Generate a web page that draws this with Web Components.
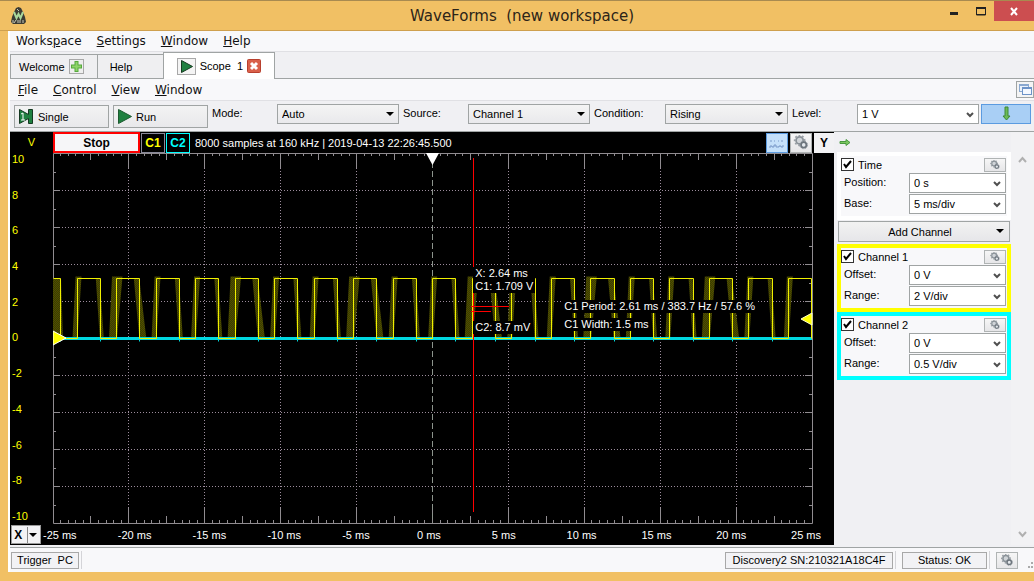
<!DOCTYPE html>
<html lang="en">
<head>
<meta charset="utf-8">
<title>WaveForms (new workspace)</title>
<style>
  html, body { height: 100%; margin: 0; }
  body {
    --gold: #f1c064; --face: #f0f0f3; --bar: #f8f8fa; --edge: #a0a4a4; --ui: "Liberation Sans", Arial, sans-serif;
    --menu: "DejaVu Sans", Verdana, sans-serif;
    font: 11px/14px var(--ui); color: #000; background: var(--gold);
  }
</style>
</head>
<body>
<wf-window>
  <wf-titlebar slot="title">WaveForms&nbsp; (new workspace)</wf-titlebar>
  <wf-menubar>
    <a href="#workspace">Works<u>p</u>ace</a><a href="#settings"><u>S</u>ettings</a><a href="#window"><u>W</u>indow</a><a href="#help"><u>H</u>elp</a>
  </wf-menubar>
  <wf-tabs></wf-tabs>
  <wf-menubar docked>
    <a href="#file"><u>F</u>ile</a><a href="#control"><u>C</u>ontrol</a><a href="#view"><u>V</u>iew</a><a href="#scope-window"><u>W</u>indow</a>
  </wf-menubar>
  <wf-toolbar></wf-toolbar>
  <wf-workarea>
    <wf-scope></wf-scope>
    <wf-sidebar slot="side">
      <wf-group name="Time" color="#fff">
        <wf-select label="Position:" value="0 s" look="combo"></wf-select>
        <wf-select label="Base:" value="5 ms/div" look="combo"></wf-select>
      </wf-group>
      <wf-addchannel>Add Channel</wf-addchannel>
      <wf-group name="Channel 1" color="#ffff00">
        <wf-select label="Offset:" value="0 V" look="combo"></wf-select>
        <wf-select label="Range:" value="2 V/div" look="combo"></wf-select>
      </wf-group>
      <wf-group name="Channel 2" color="#00ffff">
        <wf-select label="Offset:" value="0 V" look="combo"></wf-select>
        <wf-select label="Range:" value="0.5 V/div" look="combo"></wf-select>
      </wf-group>
    </wf-sidebar>
  </wf-workarea>
  <wf-statusbar></wf-statusbar>
</wf-window>

<script>
const BASE = `:host,*{box-sizing:border-box} button,select,input{font:inherit;color:inherit;margin:0;border-radius:0}
button{padding:0;cursor:default} svg{display:block;flex:none} a{color:inherit;text-decoration:none}`;

function define(tag, html, ready) {
  const template = document.createElement("template");
  customElements.define(tag, class extends HTMLElement {
    constructor() {
      super();
      template.innerHTML = `<style>${BASE}</style>` + html;
      this.attachShadow({ mode: "open" }).append(template.content.cloneNode(true));
      if (ready) ready(this, this.shadowRoot);
    }
  });
}

define("wf-window", `
<style>
  :host{display:flex;flex-direction:column;min-height:100vh;background:var(--gold);border-top:1px solid #a88a50}
  main{flex:1;display:flex;flex-direction:column;margin:0 0 9px 8px;border-left:2px solid #fff;background:var(--face)}
  ::slotted(wf-workarea){flex:1}
</style>
<slot name="title"></slot>
<main><slot></slot></main>`);

define("wf-titlebar", `
<style>
  :host{display:grid;grid-template-columns:1fr auto 1fr;height:30px;padding-left:10px;border-bottom:1px solid #cfa04e;color:#2c2418;font:15px/30px var(--menu)}
  .logo{margin-top:6px}
  .controls{display:flex;justify-content:flex-end;height:20px}
  button{display:grid;place-items:center;width:27px;border:0;background:none}
  .close{width:40px;background:#cc4e50}
</style>
<svg class="logo" width="17" height="17" viewBox="0 0 17 17" role="img" aria-label="WaveForms">
  <path d="M6 1 8.500 0 11 1l2 4 2 5 1 5-2 2H3l-2-2 1-5 2-5z" fill="#3c3c34"/>
  <path d="M4 5l2.500 6 2-4 2 4L13 5" fill="none" stroke="#a9d79b" stroke-width="2"/>
  <path d="M3 13v3m3-3-2 3m4-3v3m2-3v3m3-3v3M7 2l2 2" stroke="#c9c9b8"/>
</svg>
<span><slot></slot></span>
<div class="controls">
  <button aria-label="Minimize"><svg width="8" height="20"><path d="M0 12.500h8" stroke="#222" stroke-width="3"/></svg></button>
  <button aria-label="Maximize"><svg width="10" height="20"><path d="M.5 6v8h9V6M0 13.500h10" fill="none" stroke="#222"/><path d="M0 7h10" stroke="#222" stroke-width="2"/></svg></button>
  <button class="close" aria-label="Close"><svg width="8" height="20"><path d="M1 7l6 7M7 7l-6 7" stroke="#fff" stroke-width="2"/></svg></button>
</div>`);

define("wf-menubar", `
<style>
  :host{display:flex;align-items:center;height:21px;padding-left:6px;gap:15px;background:var(--bar);border-bottom:1px solid #e0e0e4;font:12px/20px var(--menu)}
  :host([docked]){padding-left:8px;height:22px}
  ::slotted(a){color:#111;text-decoration:none}
  button{display:none;margin-left:auto;width:18px;height:17px;border:1px solid var(--edge);background:#f4f4f4}
  :host([docked]) button{display:block}
</style>
<slot></slot>
<button aria-label="Float window"><svg width="16" height="15" viewBox="0 0 16 15"><rect x="2.500" y="2.500" width="9" height="7" fill="#eaf2fc" stroke="#8aa8d0"/><path d="M2 3h10" stroke="#8aa8d0" stroke-width="2"/><rect x="5.500" y="5.500" width="9" height="7" fill="#f4f8ff" stroke="#6d93c8"/><path d="M5 6h10" stroke="#6d93c8" stroke-width="2"/></svg></button>`);

define("wf-tabs", `
<style>
  :host{display:flex;align-items:flex-end;height:27px;border-bottom:1px solid var(--edge);background:var(--face)}
  button{display:flex;align-items:center;gap:4px;height:24px;padding:0 13px 0 8px;border:solid var(--edge);border-width:1px 0 0 1px;background:#efeff1}
  .help{width:66px;padding-left:12px}
  .scope{height:27px;margin-bottom:-1px;padding:0 13px;background:#fff;border-right-width:1px}
</style>
<button role="tab">Welcome
  <svg width="15" height="15"><rect x=".5" y=".5" width="14" height="14" fill="#eee" stroke="#a8a8a8"/><path d="M7.500 2v11M2 7.500h11" stroke="#55a83c" stroke-width="4"/><path d="M7.500 3v9M3 7.500h9" stroke="#8ed468" stroke-width="2"/></svg></button>
<button role="tab" class="help">Help</button>
<button role="tab" class="scope" aria-selected="true">
  <svg width="19" height="17"><rect x=".5" y=".5" width="18" height="16" fill="#f4f4f4" stroke="#a8a8a8"/><path d="M4.500 2.500l11 6-11 6z" fill="#1f8040" stroke="#163a20"/></svg>
  Scope&nbsp; 1
  <svg width="14" height="14"><rect x=".5" y=".5" width="13" height="13" rx="1" fill="#d9604a" stroke="#b8402e"/><path d="M4 4l6 6M10 4l-6 6" stroke="#fff" stroke-width="3"/></svg>
</button>`);

define("wf-select", `
<style>
  :host{display:flex}
  label{flex:none;width:var(--label,65px);line-height:19px;white-space:pre}
  span{position:relative;flex:1;display:block}
  select{appearance:none;display:block;width:100%;height:20px;padding:0 18px 0 4px;border:1px solid var(--edge);background:linear-gradient(#f4f4f4,#e9e9ec);line-height:18px;outline:0}
  svg{position:absolute;right:5px;top:8px;pointer-events:none}
  :host([look=combo]) select{background:#fff}
  .v{display:none}
  :host([look=combo]) .v{display:block}
  :host([look=combo]) .t{display:none}
</style>
<label for="s"></label>
<span><select id="s"><option></option></select>
<svg class="t" width="8" height="5"><path d="M0 0h8L4 4z"/></svg>
<svg class="v" width="8" height="6"><path d="M1 1l3 3 3-3" fill="none" stroke="#505050" stroke-width="2"/></svg></span>`,
(host, root) => {
  root.querySelector("label").textContent = host.getAttribute("label");
  root.querySelector("option").textContent = host.getAttribute("value");
});

define("wf-toolbar", `
<style>
  :host{display:flex;align-items:flex-start;gap:4px;height:31px;padding:3px 3px 0 4px;background:var(--face);border-bottom:1px solid var(--edge)}
  .act{display:flex;align-items:center;gap:4px;flex:none;width:95px;height:23px;margin-top:1px;padding:0 3px;border:1px solid var(--edge);background:linear-gradient(#f3f3f3,#e8e8eb)}
  wf-select{flex:1 1 187px}
  .condition{--label:71px;flex-basis:194px}
  .level{display:flex;gap:2px;flex:1 1 239px}
  .drop{flex:none;width:50px;height:20px;display:grid;place-items:center;border:1px solid #5b9be0;background:#a9cff5}
</style>
<button class="act"><svg width="16" height="17"><path d="M1.500 1.500l9 5v-5h4v14h-4v-5l-9 5z" fill="#1f8040" stroke="#143820"/><path d="M3 6l2-1v7M3 12h4" fill="none" stroke="#fff"/></svg>Single</button>
<button class="act"><svg width="15" height="17"><path d="M1.500 1.500l13 7-13 7z" fill="#1f8040" stroke="#1c5a30"/></svg>Run</button>
<wf-select label="Mode:" value="Auto"></wf-select>
<wf-select label="Source:" value="Channel 1"></wf-select>
<wf-select class="condition" label="Condition:" value="Rising"></wf-select>
<div class="level"><wf-select label="Level:" value="1 V" look="combo"></wf-select>
<button class="drop" aria-label="Trigger settings"><svg width="9" height="16"><path d="M3 1h3v9h2l-3.500 4L1 10h2z" fill="#6cbb55" stroke="#3c8838"/></svg></button></div>`);

define("wf-workarea", `
<style>
  :host{display:grid;grid-template-columns:minmax(0,1fr) 200px;border-bottom:1px solid var(--edge);padding-bottom:2px}
</style>
<slot></slot><slot name="side"></slot>`);

define("wf-gear", `
<style>
  :host{display:block;width:22px;height:14px}
  button{display:grid;place-items:center;width:100%;height:100%;border:1px solid #b0b4b4;background:linear-gradient(#f6f6f6,#e6e6e8)}
  svg{height:80%;max-width:90%}
</style>
<button aria-label="Options"><svg viewBox="0 0 16 16" width="16"><circle cx="6.500" cy="6" r="4" fill="#d0d4d8" stroke="#8a9298" stroke-width="2"/><circle cx="6.500" cy="6" r="5.500" fill="none" stroke="#9aa0a6" stroke-width="2" stroke-dasharray="2 2"/><circle cx="11" cy="11" r="3" fill="#e4e8ec" stroke="#6c747c" stroke-width="2"/><circle cx="11" cy="11" r="4.300" fill="none" stroke="#8c949c" stroke-dasharray="2 1.400"/></svg></button>`);

define("wf-group", `
<style>
  :host{display:block;border:4px solid var(--group);padding:0 1px 2px 0;background:var(--bar)}
  header{display:flex;align-items:center;justify-content:space-between;height:17px}
  label{display:flex;align-items:center;gap:4px}
  input{appearance:none;width:13px;height:13px;border:1px solid #333;background:#fff;display:grid}
  input:checked{background:#fff url('data:image/svg+xml,<svg xmlns="http://www.w3.org/2000/svg" width="11" height="11"><path d="M2 5l2 3 5-6" fill="none" stroke="black" stroke-width="2"/></svg>')}
  .rows{display:grid;gap:1px;padding-left:3px}
</style>
<header><label><input type="checkbox" checked><b></b></label><wf-gear></wf-gear></header>
<div class="rows"><slot></slot></div>`,
(host, root) => {
  root.querySelector("b").replaceWith(host.getAttribute("name"));
  host.style.setProperty("--group", host.getAttribute("color"));
});

define("wf-addchannel", `
<style>
  :host{display:block;padding:1px 1px 2px}
  button{display:flex;align-items:center;width:100%;height:21px;padding:0 5px;border:1px solid var(--edge);background:linear-gradient(#f2f2f2,#e6e6e9)}
  span{flex:1;text-align:center}
</style>
<button><span><slot></slot></span><svg width="8" height="5"><path d="M0 0h8L4 4z"/></svg></button>`);

define("wf-sidebar", `
<style>
  :host{display:grid;grid-template-columns:minmax(0,1fr) 23px;background:var(--face);padding-left:3px}
  .go{display:block;border:0;background:none;height:20px;padding-left:2px}
  .scroll{display:flex;flex-direction:column;justify-content:space-between;align-items:center;padding:24px 0 7px;background:#f2f2f4}
</style>
<div><button class="go" aria-label="Collapse panel"><svg width="12" height="9"><path d="M1 3.500h6v-2l4 3-4 3v-2H1z" fill="#7cc860" stroke="#4a9840"/></svg></button><slot></slot></div>
<div class="scroll"><svg width="9" height="7"><path d="M1 6l3.500-4L8 6" fill="none" stroke="#b0b0b0" stroke-width="2"/></svg><svg width="9" height="7"><path d="M1 1l3.500 4L8 1" fill="none" stroke="#b0b0b0" stroke-width="2"/></svg></div>`);

define("wf-plot", `
<style>
  :host{display:block;position:relative;min-height:200px}
  svg{position:absolute;width:100%;height:100%}
  svg *{vector-effect:non-scaling-stroke}
  p{position:absolute;margin:0;padding:0 2px;background:#000;color:#fff;line-height:13px;white-space:nowrap}
  .x{left:55.3%;top:30.8%}
  .c2{left:55.3%;top:45.4%}
  .period{left:67%;top:39.6%}
  .width{left:67%;top:44.5%}
</style>
<svg viewBox="0 0 760 371" preserveAspectRatio="none" aria-hidden="true"></svg>
<p class="x">X: 2.64 ms<br>C1: 1.709 V</p><p class="c2">C2: 8.7 mV</p>
<p class="period">C1 Period: 2.61 ms / 383.7 Hz / 57.6 %</p><p class="width">C1 Width: 1.5 ms</p>`,
(host, root) => {
  const W = 759, H = 370, DX = W / 10, DY = H / 10, HIGH = 125.5, LOW = 185.5, PERIOD = 39.52, DUTY = 23.3;
  const px = v => Math.round(v) + .5;
  let grid = "", ticks = "", band = "", wave = `M.5 ${HIGH}`, glow = "";
  for (let i = 1; i < 10; i++) {
    if (i !== 5) grid += `M${px(i * DX - .5)} 0V${H}`;
    grid += `M0 ${px(i * DY)}H${W}`;
  }
  for (let i = 1; i < 100; i++) {
    const n = i % 10 === 0 ? 15 : i % 5 === 0 ? 7 : 3, x = px(i * DX / 10 - .5);
    ticks += `M${x} 0v${n}M${x} ${H}v-${n}`;
  }
  for (let i = 1; i < 20; i++) {
    const n = i % 2 ? 3 : 7, y = px(i * DY / 2);
    ticks += `M0 ${y}h${n}M${W} ${y}h-${n}`;
  }
  band += `M0 ${HIGH}h8l2 60H0z`;
  for (let k = -1; k < 19; k++) {
    const r = 23.5 + k * PERIOD, f = r + DUTY, wide = k % 3 === 1 ? 3 : 0;
    if (k >= 0) {
      wave += `H${px(r)}V${HIGH}`;
      band += `M${r - 4 - wide} ${LOW}L${r - 1 - wide} ${HIGH - 2}H${r + 5 + wide / 2}L${r + 1} ${LOW}z`;
    }
    if (f < W - 2) {
      wave += `H${px(f)}V${LOW}`;
      if (k >= 0) band += `M${f - 4 - wide / 2} ${HIGH}H${f}L${f + 4 + wide} ${LOW}H${f}z`;
      glow += `M${px(f)} ${LOW - 2}v5`;
    }
  }
  wave += `H${W - .5}V${LOW}`;
  root.querySelector("svg").innerHTML = `
    <defs><pattern id="h" width="2" height="2" patternUnits="userSpaceOnUse"><rect width="2" height="2" fill="#344400"/><path d="M0 0h1v1H0zM1 1h1v1H1z" fill="#584800"/></pattern></defs>
    <path d="${grid}" stroke="#9c8c9c" stroke-dasharray="1 2" fill="none"/>
    <path d="${ticks}M.5 .5H${W + .5}V${H + .5}H.5z" stroke="#908c90" fill="none"/>
    <path d="M379.500 0V${H}" stroke="#8c948c" stroke-dasharray="6 3"/>
    <path d="${band}" fill="url(#h)"/>
    <path d="M0 185.500H${W}" stroke="#00d8e0" stroke-width="3"/>
    <path d="${glow}" stroke="#00d8d8" fill="none"/>
    <path d="${wave}" stroke="#f0f000" fill="none"/>
    <path d="M420.500 5V359M418 153.500h38M418 158.500h20" stroke="#f00" fill="none"/>
    <path d="M373 0h13l-6.500 12z" fill="#fff"/>
    <path d="M0 178l13 7-13 7z" fill="#ff0" stroke="#fff"/>
    <path d="M759 160l-11 6 11 6z" fill="#ff0" stroke="#ffc"/>`;
});

define("wf-scope", `
<style>
  :host{display:grid;grid-template-columns:43px minmax(0,1fr) 21px;grid-template-rows:21px minmax(0,1fr) 21px;background:#000;color:#fff}
  .unit{color:#ff0;text-align:center;line-height:21px}
  .head{grid-column:2/4;display:flex;gap:1px;align-items:center}
  .head button{height:20px;width:24px;border:1px solid #889;background:#000;font-weight:bold;font-size:12px}
  .head .stop{width:87px;height:21px;border:2px solid #f00;background:#f6f6f8;color:#000}
  .c1{color:#ff0}
  .head .c2{color:#0ff;border-color:#0ff}
  .info{flex:1;padding-left:4px;white-space:nowrap}
  .right{display:flex;gap:2px}
  .head .wave{display:grid;place-items:center;width:22px;border-color:#5b9be0;background:#c4e0fa}
  .right wf-gear{height:20px}
  .head .y{width:20px;background:#f2f2f4;color:#000;border:0}
  .volts{display:flex;flex-direction:column;justify-content:space-between;color:#ff0;padding:0 0 2px 2px;line-height:12px}
  .times{grid-column:1/4;display:flex;align-items:center;padding:0 13px 0 1px;gap:2px}
  .x{display:flex;flex:none;align-items:center;justify-content:space-around;width:30px;height:19px;border:1px solid #999;background:#f2f2f4;color:#000;font-weight:bold;font-size:12px}
  .scale{flex:1;display:grid;grid-template-columns:repeat(10,minmax(0,1fr)) auto}
  .scale span{white-space:nowrap}
</style>
<div class="unit">V</div>
<div class="head"><button class="stop">Stop</button><button class="c1">C1</button><button class="c2">C2</button>
  <span class="info">8000 samples at 160 kHz | 2019-04-13 22:26:45.500</span>
  <div class="right"><button class="wave" aria-label="Data view"><svg width="16" height="14"><path d="M1 5h2m2 0h1m3 0h1m2 0h2M1 12v-2h2v1h2v-2h2v2h3v-1h2v1h2v-2" fill="none" stroke="#7898c8"/></svg></button><wf-gear></wf-gear><button class="y">Y</button></div></div>
<div class="volts"></div>
<wf-plot></wf-plot><div></div>
<div class="times"><button class="x">X<svg width="11" height="16"><path d="M.5 0v16" stroke="#888"/><path d="M2 6h8L6 10z"/></svg></button><div class="scale"></div></div>`,
(host, root) => {
  const fill = (sel, values) => root.querySelector(sel).innerHTML = values.map(v => `<span>${v}</span>`).join("");
  fill(".volts", [10, 8, 6, 4, 2, 0, -2, -4, -6, -8, -10]);
  fill(".scale", [-25, -20, -15, -10, -5, 0, 5, 10, 15, 20, 25].map(v => v + " ms"));
});

define("wf-statusbar", `
<style>
  :host{display:flex;align-items:center;height:24px;padding-left:1px;background:var(--bar)}
  button{height:17px;border:1px solid #a8a8a8;background:#f2f2f5;line-height:15px}
  .trigger{width:68px}
  .sn{width:168px;margin-left:auto}
  .ok{width:85px}
  i{width:1px;height:18px;margin:0 6px 0 2px;background:#d4d4d8}
  wf-gear{height:17px}
  .grip{align-self:flex-end;margin-left:6px}
</style>
<button class="trigger">Trigger&nbsp; PC</button><i></i>
<button class="sn">Discovery2 SN:210321A18C4F</button><i></i>
<button class="ok">Status: OK</button><i></i>
<wf-gear></wf-gear>
<svg class="grip" width="10" height="10"><path d="M7 0h2v2H7zM4 4h2v2H4zM7 4h2v2H7z" fill="#aaa"/></svg>`);
</script>
</body>
</html>
